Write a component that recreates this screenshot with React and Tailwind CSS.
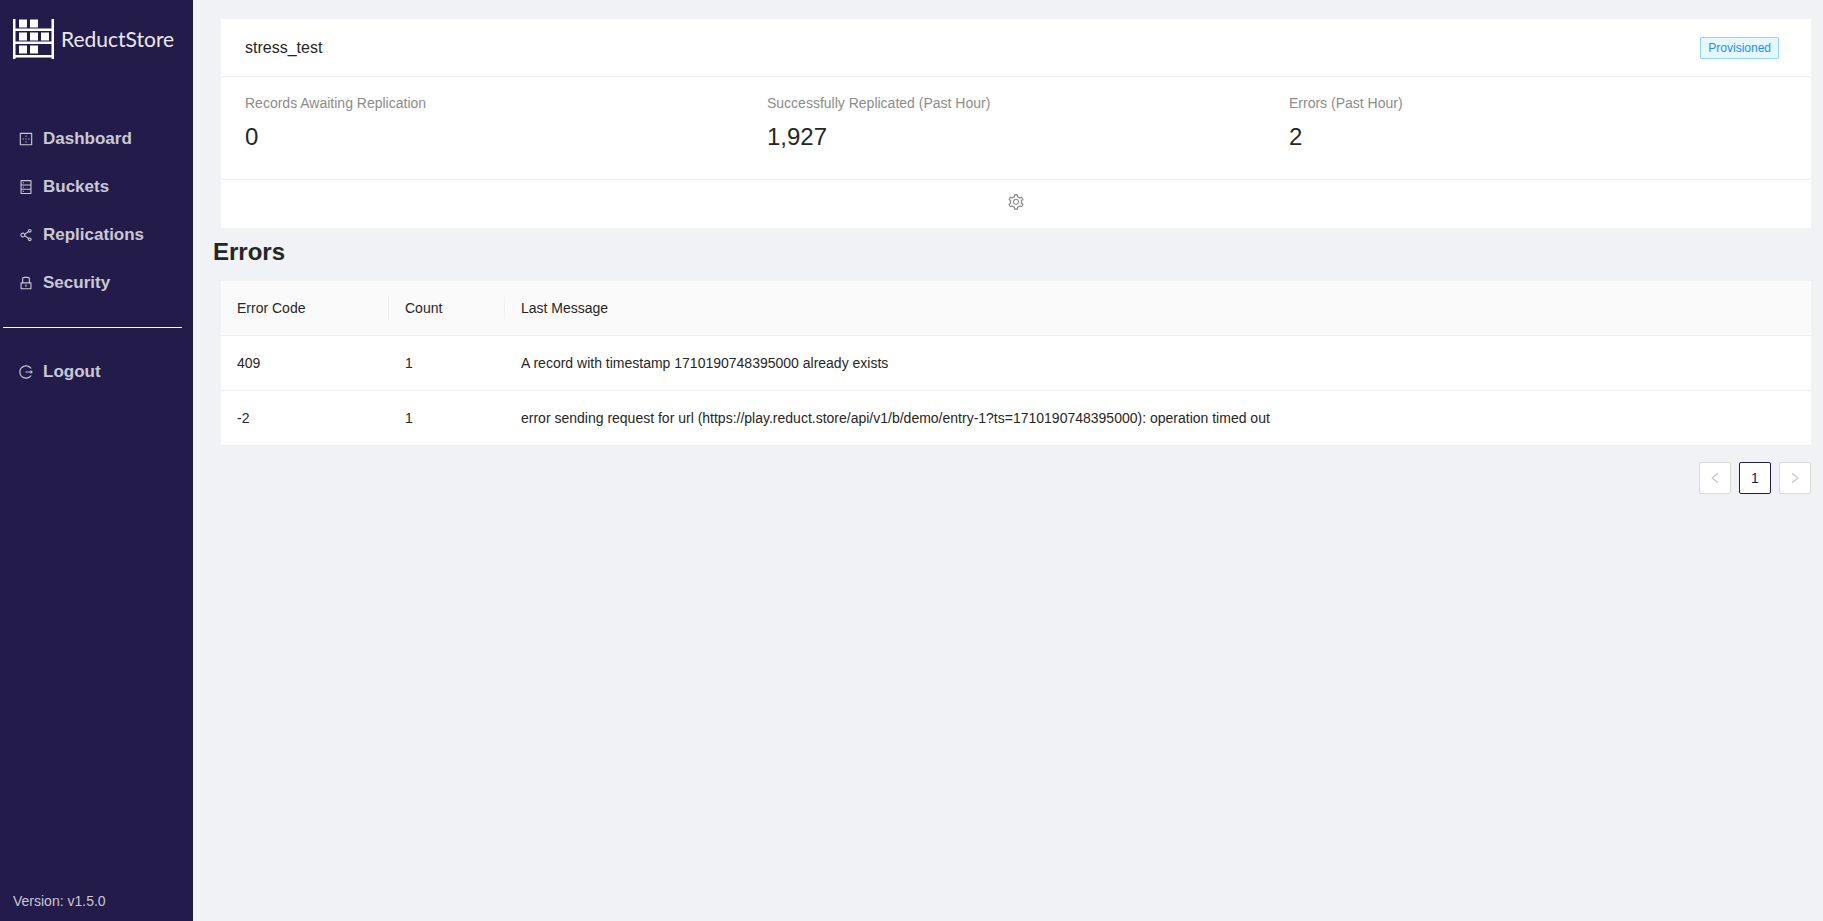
import React from 'react';
import {
  AiOutlineBorderOuter,
  AiOutlineDatabase,
  AiOutlineLeft,
  AiOutlineLock,
  AiOutlineLogout,
  AiOutlineRight,
  AiOutlineSetting,
  AiOutlineShareAlt,
} from 'react-icons/ai';

const menuItems = [
  { label: 'Dashboard', href: '#dashboard', icon: AiOutlineBorderOuter },
  { label: 'Buckets', href: '#buckets', icon: AiOutlineDatabase },
  { label: 'Replications', href: '#replications', icon: AiOutlineShareAlt },
  { label: 'Security', href: '#security', icon: AiOutlineLock },
];

const stats = [
  { title: 'Records Awaiting Replication', value: 0 },
  { title: 'Successfully Replicated (Past Hour)', value: 1927 },
  { title: 'Errors (Past Hour)', value: 2 },
];

const errors = [
  {
    code: 409,
    count: 1,
    message: 'A record with timestamp 1710190748395000 already exists',
  },
  {
    code: -2,
    count: 1,
    message:
      'error sending request for url (https://play.reduct.store/api/v1/b/demo/entry-1?ts=1710190748395000): operation timed out',
  },
];

const Logo = () => (
  <a href="#home" className="flex items-center gap-1.5 pl-[13px] text-white">
    <svg width="42" height="40" viewBox="0 0 42 40" fill="currentColor" aria-hidden="true">
      {/* Rack */}
      <path d="M0 0h2.5v40H0zM38.5 0H41v40h-2.5zM2.5 9.5h36V12h-36zM2.5 22.5h36V25h-36zM2.5 36h36v2.5h-36z" />
      {/* Boxes */}
      <path d="M6 .5h8v8H6zM17 .5h8v8h-8zM6 13.5h8v8H6zM17 13.5h8v8h-8zM28 13.5h8v8h-8zM6 26.5h8v8H6zM17 26.5h8v8h-8z" />
    </svg>
    <span className="font-[Lato,sans-serif] text-[21px] leading-6 text-[#e9e8ed]">ReductStore</span>
  </a>
);

const MenuLink = ({ label, href, icon: Icon }) => (
  <a
    href={href}
    className="flex h-10 items-center gap-[9px] pl-[18px] text-[17px] font-bold text-[#cac8d2] hover:text-white"
  >
    <Icon size={16} />
    <span>{label}</span>
  </a>
);

const Sidebar = () => (
  <aside className="flex w-[193px] shrink-0 flex-col bg-[#231b49] pt-[19px] pb-2">
    <Logo />
    <nav className="mt-[60px] flex flex-col gap-2">
      {menuItems.map((item) => (
        <MenuLink key={item.label} {...item} />
      ))}
    </nav>
    <hr className="mt-6 mr-[11px] ml-[3px] border-white" />
    <div className="mt-6">
      <MenuLink label="Logout" href="#logout" icon={AiOutlineLogout} />
    </div>
    <p className="mt-auto pl-[13px] text-sm leading-6 text-[#cac8d2]">Version: v1.5.0</p>
  </aside>
);

const ReplicationCard = () => (
  <section className="bg-white">
    <div className="flex h-[58px] items-center justify-between border-b border-[#f0f0f0] pr-8 pl-6">
      <h1 className="text-base">stress_test</h1>
      <span className="rounded-xs border border-[#91d5ff] bg-[#e6f7ff] px-[7px] text-xs leading-5 text-[#1890ff]">
        Provisioned
      </span>
    </div>
    <dl className="grid grid-cols-3 pt-[15px] pb-6 pl-6">
      {stats.map((stat) => (
        <div key={stat.title}>
          <dt className="mb-[5px] text-sm leading-[22px] text-[#8c8c8c]">{stat.title}</dt>
          <dd className="text-2xl leading-9">{stat.value.toLocaleString('en-US')}</dd>
        </div>
      ))}
    </dl>
    <div className="flex h-[49px] items-center justify-center border-t border-[#f0f0f0] pb-1">
      <button type="button" aria-label="Settings" className="text-[#8c8c8c] hover:text-[#231b49]">
        <AiOutlineSetting size={18} />
      </button>
    </div>
  </section>
);

const ErrorTable = () => (
  <table className="w-full table-fixed border-collapse bg-white text-left text-sm leading-[22px]">
    <thead className="bg-[#fafafa]">
      <tr className="border-b border-[#f0f0f0]">
        <th className="w-[168px] py-4 pl-4 font-normal">
          <div className="border-r border-[#f0f0f0]">Error Code</div>
        </th>
        <th className="w-[116px] py-4 pl-4 font-normal">
          <div className="border-r border-[#f0f0f0]">Count</div>
        </th>
        <th className="p-4 font-normal">Last Message</th>
      </tr>
    </thead>
    <tbody>
      {errors.map((error) => (
        <tr key={error.code} className="border-b border-[#f0f0f0]">
          <td className="p-4">{error.code}</td>
          <td className="p-4">{error.count}</td>
          <td className="p-4">{error.message}</td>
        </tr>
      ))}
    </tbody>
  </table>
);

const Pagination = () => (
  <nav aria-label="Pagination" className="mt-4 flex justify-end gap-2">
    <button
      type="button"
      aria-label="Previous page"
      disabled
      className="flex size-8 items-center justify-center rounded-xs border border-[#d9d9d9] bg-white text-[#bfbfbf]"
    >
      <AiOutlineLeft size={14} />
    </button>
    <button
      type="button"
      aria-current="page"
      className="size-8 rounded-xs border border-[#231b49] bg-white text-sm text-[#231b49]"
    >
      1
    </button>
    <button
      type="button"
      aria-label="Next page"
      disabled
      className="flex size-8 items-center justify-center rounded-xs border border-[#d9d9d9] bg-white text-[#bfbfbf]"
    >
      <AiOutlineRight size={14} />
    </button>
  </nav>
);

const App = () => {
  return (
    <div className="flex min-h-screen bg-[#f0f2f5] font-['Liberation_Sans',Arial,sans-serif] text-[#262626]">
      <Sidebar />
      <main className="min-w-0 flex-1 pt-[19px] pr-3 pb-6 pl-5">
        <div className="pl-2">
          <ReplicationCard />
        </div>
        <h2 className="mt-2 mb-[13px] text-2xl leading-8 font-bold">Errors</h2>
        <div className="pl-2">
          <ErrorTable />
          <Pagination />
        </div>
      </main>
    </div>
  );
};

export default App;
